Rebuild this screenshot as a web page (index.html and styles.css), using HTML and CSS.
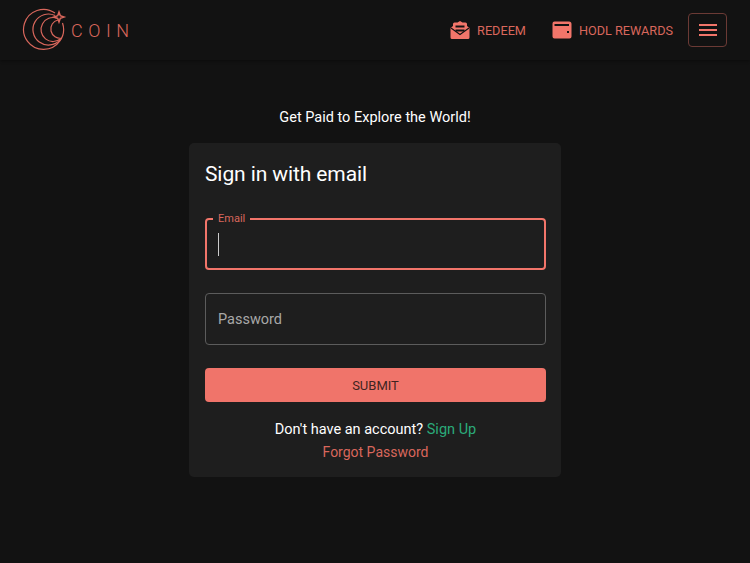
FILE: index.html
```html
<!DOCTYPE html>
<html lang="en">

<head>
    <meta charset="UTF-8">
    <meta name="viewport" content="width=device-width, initial-scale=1.0">
    <title>Coin - Sign in</title>
    <link rel="stylesheet" href="styles.css">
</head>

<body>
    <header class="topbar">
        <a class="brand" href="#">
            <svg class="brand-logo" width="46" height="44" viewBox="0 0 46 44" fill="none" stroke="#d9675c" stroke-width="1.2">
                <path d="M33 5 A20 20 0 1 0 40.500 15" />
                <path d="M33 7.500 A15.500 15.500 0 1 0 38 31.900" />
                <path d="M35 10.200 A12 12 0 1 0 39 30.500" />
                <path d="M36 12 A9.200 9.200 0 0 0 40 30" />
                <path d="M37 4 L38.300 7.700 L42 9 L38.300 10.300 L37 14 L35.700 10.300 L32 9 L35.700 7.700 Z" stroke-width="1.500" />
            </svg>
            <span class="brand-name">COIN</span>
        </a>
        <nav class="topnav">
            <a class="nav-link" href="#">
                <svg width="20" height="20" viewBox="0 0 20 20" fill="#f2756a">
                    <path d="M10 1 L12.500 2.500 H15.500 Q17 2.500 17 4 V6 L19.500 8 V17.500 Q19.500 19 18 19 H2 Q0.500 19 0.500 17.500 V8 L3 6 V4 Q3 2.500 4.500 2.500 H7.500 Z" />
                    <rect x="5.500" y="5.500" width="9" height="2" fill="#121212" />
                    <rect x="5.500" y="9.500" width="9" height="2" fill="#121212" />
                    <path d="M1 8 L10 14.500 L19 8" fill="none" stroke="#121212" stroke-width="1.200" />
                </svg>
                <span>REDEEM</span>
            </a>
            <a class="nav-link" href="#">
                <svg width="20" height="20" viewBox="0 0 20 20" fill="#f2756a">
                    <path fill-rule="evenodd" d="M2.500 1.500 H17 Q19.500 1.500 19.500 4 V16.500 Q19.500 18.500 17.500 18.500 H2.500 Q0.500 18.500 0.500 16.500 V3.500 Q0.500 1.500 2.500 1.500 Z M2.500 4 V6 H17 V4 Z M15 11 V13 H17 V11 Z" />
                </svg>
                <span>HODL REWARDS</span>
            </a>
            <button class="menu-btn" type="button" aria-label="Menu">
                <span></span>
                <span></span>
                <span></span>
            </button>
        </nav>
    </header>

    <main class="page">
        <p class="tagline">Get Paid to Explore the World!</p>
        <div class="card">
            <h2>Sign in with email</h2>
            <form class="signin">
                <div class="field focused">
                    <label>Email</label>
                    <span class="caret"></span>
                </div>
                <div class="field">
                    <span class="placeholder">Password</span>
                </div>
                <button class="submit" type="button">SUBMIT</button>
            </form>
            <p class="links">Don't have an account? <a class="signup" href="#">Sign Up</a></p>
            <p class="links forgot-row"><a class="forgot" href="#">Forgot Password</a></p>
        </div>
    </main>
</body>

</html>
```
FILE: styles.css
```css
body {
    margin: 0;
    height: 563px;
    overflow: hidden;
    background-color: #121212;
    color: #fff;
    font-family: Roboto, sans-serif;
}

a {
    text-decoration: none;
}

.topbar {
    height: 60px;
    box-sizing: border-box;
    padding: 0 23px 0 22px;
    display: flex;
    align-items: center;
    justify-content: space-between;
    background-color: #121212;
    box-shadow: 0 1px 3px rgba(0, 0, 0, 0.4);
}

.brand {
    display: flex;
    align-items: center;
    gap: 3px;
}

.brand-name {
    color: #d9675c;
    font-size: 18px;
    font-weight: 300;
    letter-spacing: 5.500px;
}

.topnav {
    display: flex;
    align-items: center;
}

.nav-link {
    display: flex;
    align-items: center;
    gap: 7px;
    margin-right: 26px;
    color: #d9675c;
    font-size: 12.700px;
}

.nav-link:last-of-type {
    margin-right: 15px;
}

.menu-btn {
    width: 39px;
    height: 34px;
    padding: 0;
    display: flex;
    flex-direction: column;
    align-items: center;
    justify-content: center;
    gap: 3px;
    background: none;
    border: 1px solid #6b3a35;
    border-radius: 4px;
}

.menu-btn span {
    width: 18px;
    height: 2px;
    background-color: #f2756a;
}

.page {
    display: flex;
    flex-direction: column;
    align-items: center;
}

.tagline {
    margin: 49px 0 16px;
    font-size: 14.500px;
    line-height: 18px;
}

.card {
    width: 372px;
    height: 334px;
    box-sizing: border-box;
    padding: 17px 15px 16px 16px;
    background-color: #1e1e1e;
    border-radius: 5px;
}

h2 {
    margin: 0 0 29px;
    font-size: 21px;
    font-weight: 400;
    letter-spacing: -0.100px;
    line-height: 29px;
}

.signin {
    display: flex;
    flex-direction: column;
    margin-bottom: 16px;
}

.field {
    position: relative;
    height: 52px;
    box-sizing: border-box;
    margin-bottom: 23px;
    padding: 0 12px;
    display: flex;
    align-items: center;
    border: 1px solid #5c5c5c;
    border-radius: 4px;
}

.field.focused {
    border: 2px solid #f2756a;
    padding: 0 11px;
}

.field label {
    position: absolute;
    top: -8px;
    left: 6px;
    padding: 0 5px;
    background-color: #1e1e1e;
    color: #d9675c;
    font-size: 11px;
    line-height: 14px;
}

.caret {
    width: 1px;
    height: 23px;
    background-color: #ccc;
}

.placeholder {
    color: #a8a8a8;
    font-size: 14.500px;
}

.submit {
    height: 34px;
    border: none;
    border-radius: 4px;
    background-color: #f0746a;
    color: #3f2421;
    font-family: inherit;
    font-size: 13px;
}

.links {
    margin: 0;
    text-align: center;
    font-size: 14.500px;
    line-height: 23px;
}

.forgot-row {
    font-size: 14px;
}

.signup {
    color: #2bab7a;
}

.forgot {
    color: #d9675c;
}
```
